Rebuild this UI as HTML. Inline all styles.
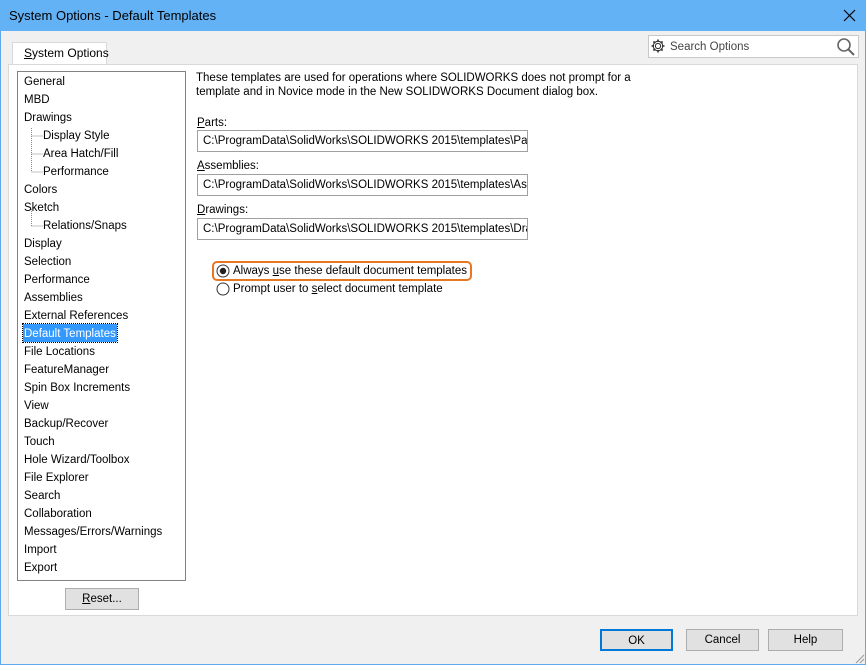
<!DOCTYPE html>
<html><head><style>
*{margin:0;padding:0;box-sizing:border-box}
body{width:866px;height:665px;position:relative;background:#f0f0f0;font-family:"Liberation Sans",sans-serif;font-size:11.5px;color:#000;overflow:hidden}
.a{position:absolute}
.win{left:0;top:0;width:866px;height:665px;border:1px solid #5fa8ea}
.title{left:0;top:0;width:866px;height:31px;background:#63b2f6}
.li{position:absolute;left:6px;height:18px;line-height:20px;white-space:nowrap}
.sub{left:25px}
.btn{position:absolute;background:#e1e1e1;border:1px solid #adadad;text-align:center;line-height:20px;height:22px}
.inp{position:absolute;left:197px;width:331px;height:22px;border:1px solid #a0a0a0;background:#fff;line-height:20px;padding-left:5px;white-space:nowrap;overflow:hidden}
.lbl{position:absolute;left:197px}
u{text-decoration:underline}
</style></head><body>
<div class="a win"></div>
<div class="a title"></div>
<div class="a" style="left:9px;top:8px;font-size:13px">System Options - Default Templates</div>
<svg class="a" style="left:843px;top:9px" width="13" height="13"><path d="M1 1L12 12M12 1L1 12" stroke="#000" stroke-width="1.2"/></svg>
<div class="a" style="left:12px;top:42px;width:95px;height:23px;background:#fff;border:1px solid #d9d9d9;border-bottom:none"></div>
<div class="a" style="left:24px;top:46px;font-size:12px"><u>S</u>ystem Options</div>
<div class="a" style="left:648px;top:35px;width:211px;height:23px;background:#fff;border:1px solid #c8c8c8"></div>
<svg class="a" style="left:650px;top:38px" width="16" height="16"><circle cx="8" cy="8" r="2.6" fill="none" stroke="#333" stroke-width="1.1"/><path d="M8 1.5v2.5M8 12v2.5M1.5 8h2.5M12 8h2.5M3.4 3.4l1.8 1.8M10.8 10.8l1.8 1.8M3.4 12.6l1.8-1.8M10.8 5.2l1.8-1.8" stroke="#333" stroke-width="1.6"/><circle cx="8" cy="8" r="4.8" fill="none" stroke="#333" stroke-width="1"/></svg>
<div class="a" style="left:670px;top:41px;color:#444">Search Options</div>
<svg class="a" style="left:836px;top:37px" width="20" height="20"><circle cx="8" cy="8" r="6" fill="none" stroke="#666" stroke-width="1.6"/><path d="M12.5 12.5L18 18" stroke="#666" stroke-width="2"/></svg>
<div class="a" style="left:8px;top:64px;width:850px;height:552px;background:#fff;border:1px solid #d9d9d9"></div>
<div class="a" style="left:17px;top:71px;width:169px;height:510px;border:1px solid #828282;background:#fff">
<div class="li" style="top:0">General</div>
<div class="li" style="top:18px">MBD</div>
<div class="li" style="top:36px">Drawings</div>
<div class="li sub" style="top:54px">Display Style</div>
<div class="li sub" style="top:72px">Area Hatch/Fill</div>
<div class="li sub" style="top:90px">Performance</div>
<div class="li" style="top:108px">Colors</div>
<div class="li" style="top:126px">Sketch</div>
<div class="li sub" style="top:144px">Relations/Snaps</div>
<div class="li" style="top:162px">Display</div>
<div class="li" style="top:180px">Selection</div>
<div class="li" style="top:198px">Performance</div>
<div class="li" style="top:216px">Assemblies</div>
<div class="li" style="top:234px">External References</div>
<div class="li" style="top:252px;left:5px;padding:0 1px;background:#3399ff;color:#fff;outline:1px dotted #000">Default Templates</div>
<div class="li" style="top:270px">File Locations</div>
<div class="li" style="top:288px">FeatureManager</div>
<div class="li" style="top:306px">Spin Box Increments</div>
<div class="li" style="top:324px">View</div>
<div class="li" style="top:342px">Backup/Recover</div>
<div class="li" style="top:360px">Touch</div>
<div class="li" style="top:378px">Hole Wizard/Toolbox</div>
<div class="li" style="top:396px">File Explorer</div>
<div class="li" style="top:414px">Search</div>
<div class="li" style="top:432px">Collaboration</div>
<div class="li" style="top:450px">Messages/Errors/Warnings</div>
<div class="li" style="top:468px">Import</div>
<div class="li" style="top:486px">Export</div>
<svg class="a" style="left:13px;top:54px" width="14" height="110"><path d="M0.5 2V46M0.5 10H12M0.5 28H12M0.5 46H12M0.5 83V100M0.5 100H12" stroke="#888" stroke-dasharray="1 1"/></svg>
</div>
<div class="btn" style="left:65px;top:588px;width:74px"><u>R</u>eset...</div>
<div class="a" style="left:196px;top:71px;line-height:14px">These templates are used for operations where SOLIDWORKS does not prompt for a<br>template and in Novice mode in the New SOLIDWORKS Document dialog box.</div>
<div class="lbl" style="top:117px"><u>P</u>arts:</div>
<div class="inp" style="top:130px">C:\ProgramData\SolidWorks\SOLIDWORKS 2015\templates\Part</div>
<div class="lbl" style="top:160px"><u>A</u>ssemblies:</div>
<div class="inp" style="top:174px">C:\ProgramData\SolidWorks\SOLIDWORKS 2015\templates\Assembly</div>
<div class="lbl" style="top:204px"><u>D</u>rawings:</div>
<div class="inp" style="top:218px">C:\ProgramData\SolidWorks\SOLIDWORKS 2015\templates\Drawing</div>
<div class="a" style="left:212px;top:261px;width:260px;height:20px;border:2px solid #e87722;border-radius:5px"></div>
<svg class="a" style="left:216px;top:264px" width="14" height="14"><circle cx="7" cy="7" r="6" fill="#fff" stroke="#333"/><circle cx="7" cy="7" r="3.2" fill="#222"/></svg>
<div class="a" style="left:233px;top:265px">Always <u>u</u>se these default document templates</div>
<svg class="a" style="left:216px;top:282px" width="14" height="14"><circle cx="7" cy="7" r="6" fill="#fff" stroke="#333"/></svg>
<div class="a" style="left:233px;top:283px">Prompt user to <u>s</u>elect document template</div>
<div class="btn" style="left:600px;top:629px;width:73px;border:2px solid #0078d7">OK</div>
<div class="btn" style="left:686px;top:629px;width:73px">Cancel</div>
<div class="btn" style="left:768px;top:629px;width:75px">Help</div>
<svg class="a" style="left:855px;top:654px" width="10" height="10"><path d="M9 1L1 9M9 5L5 9" stroke="#999"/></svg>
</body></html>
